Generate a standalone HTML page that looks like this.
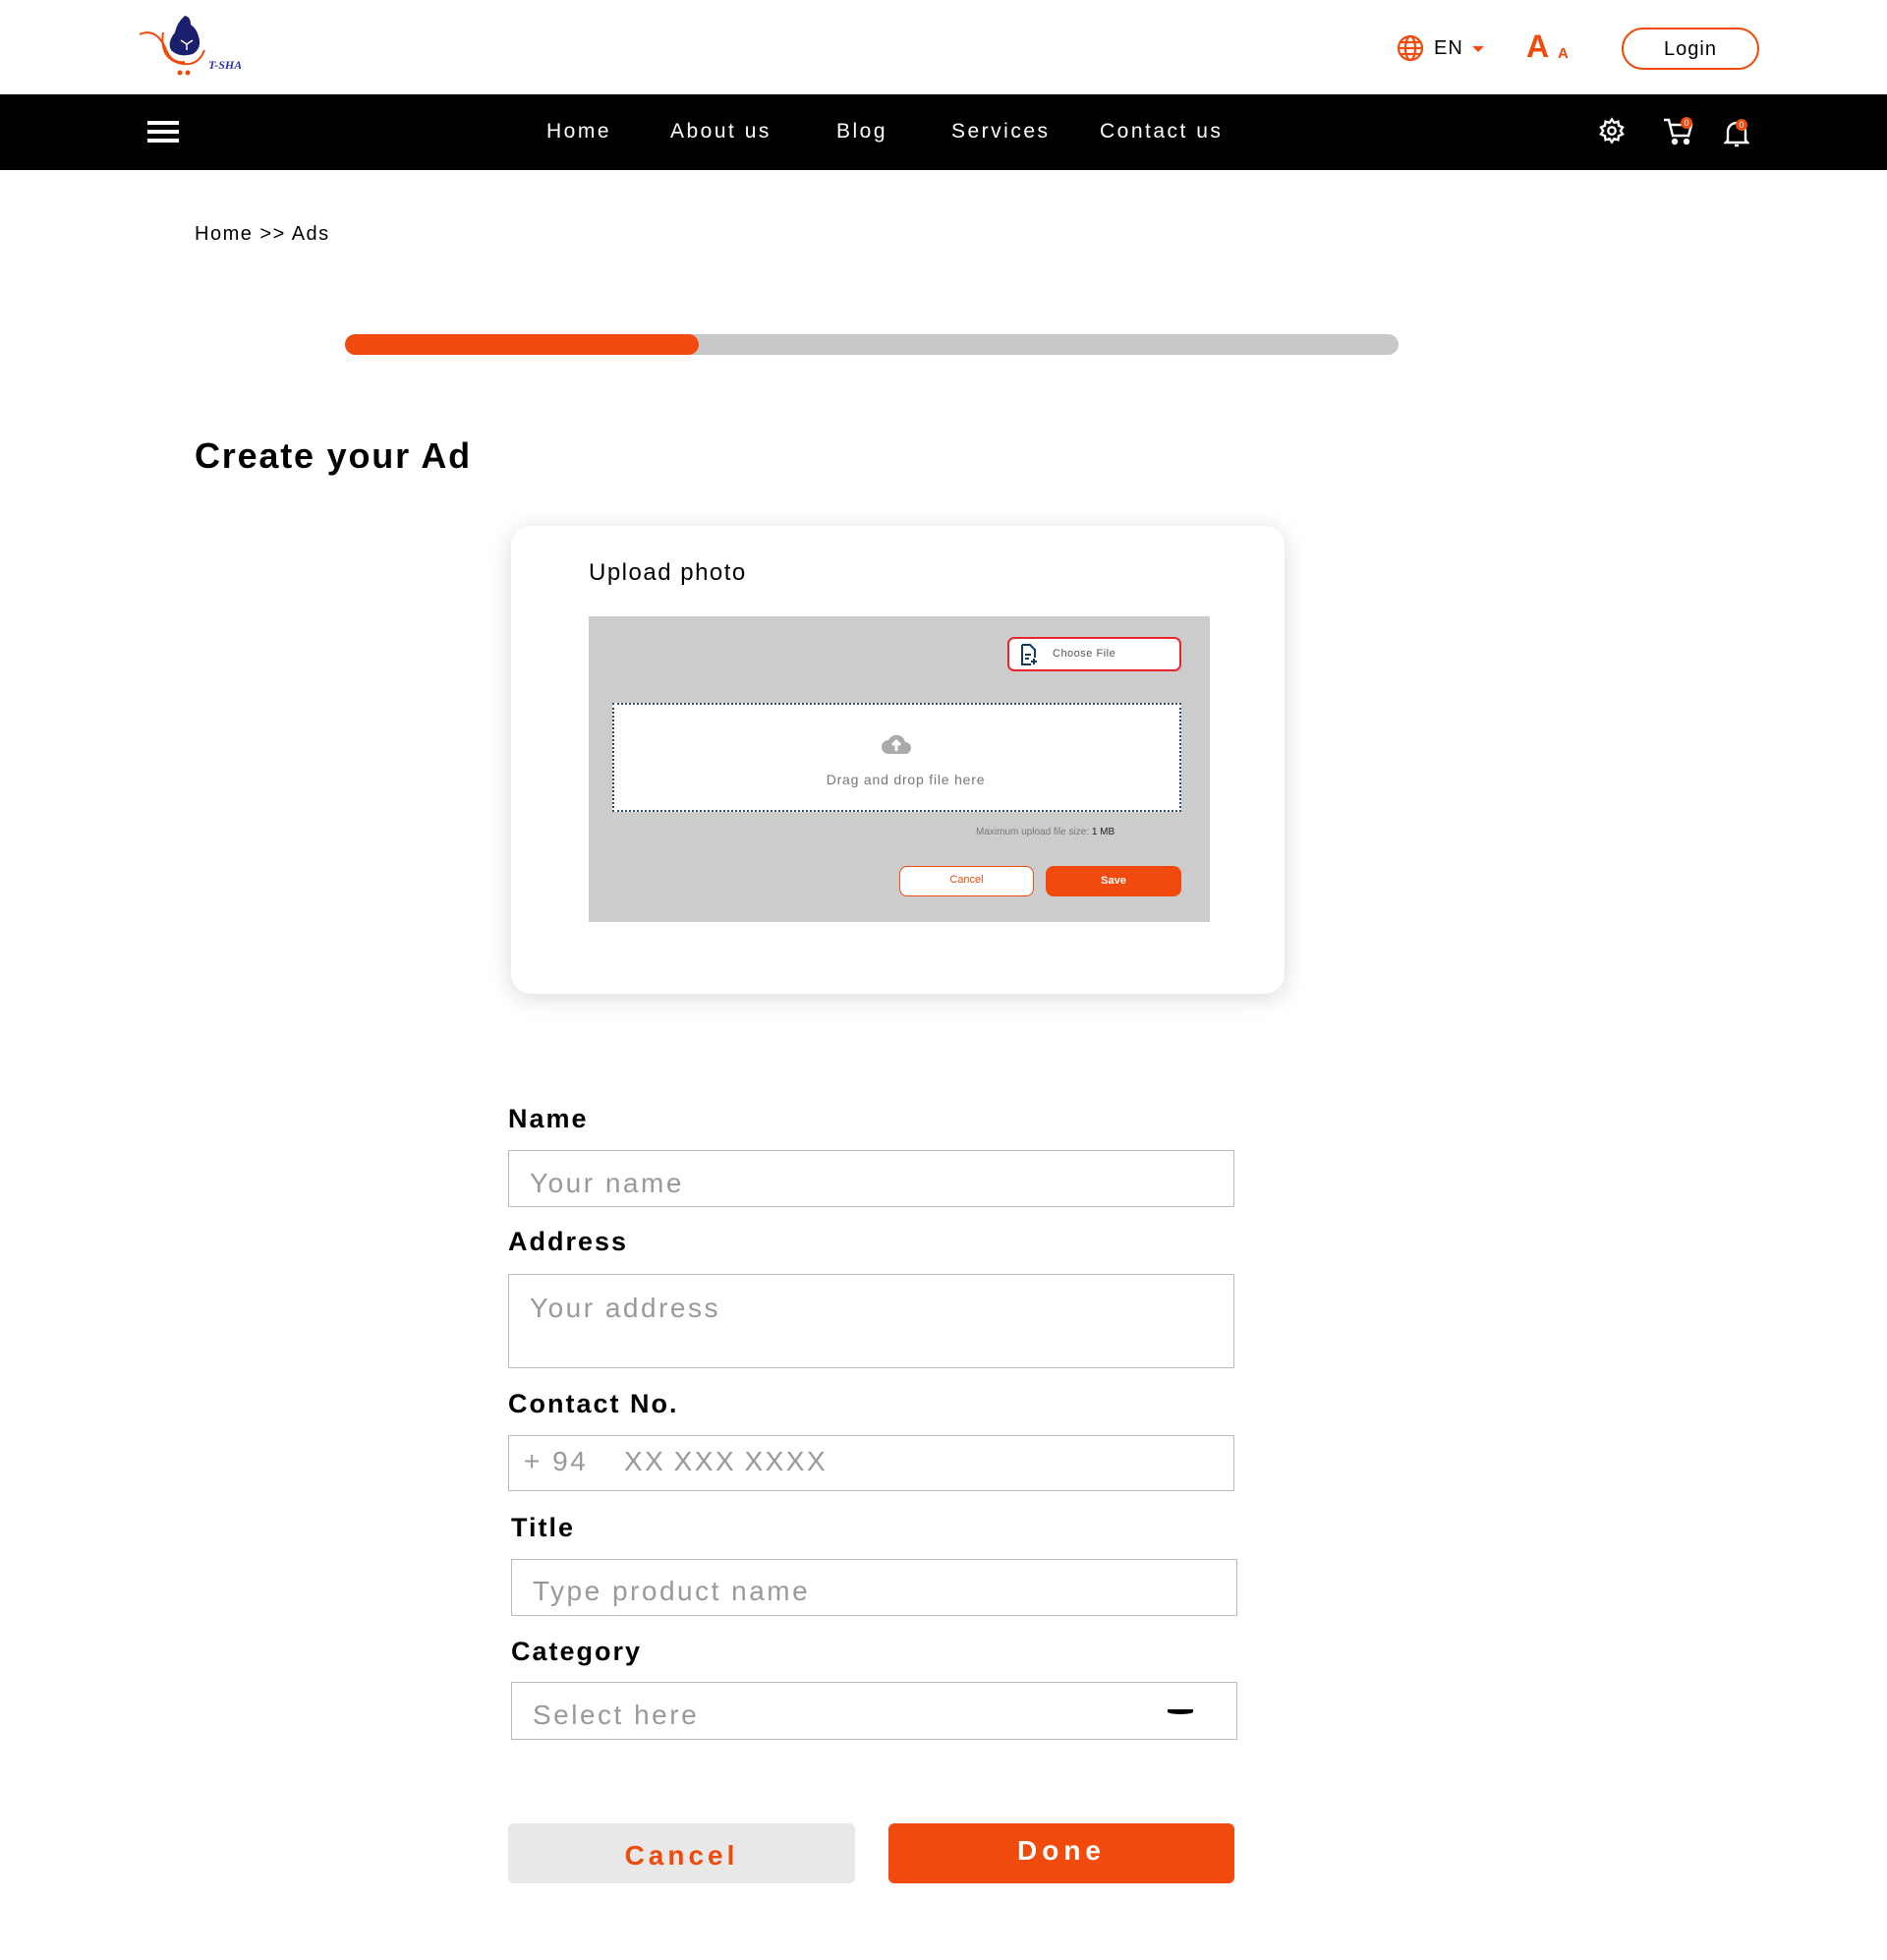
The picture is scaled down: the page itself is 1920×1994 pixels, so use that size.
<!DOCTYPE html>
<html><head><meta charset="utf-8"><style>
*{box-sizing:border-box;margin:0;padding:0}
body{width:1920px;height:1994px;background:#fff;font-family:"Liberation Sans",sans-serif;position:relative;overflow:hidden;color:#000}
.a{position:absolute}
.nav{top:96px;left:0;width:1920px;height:77px;background:#000}
.nl{color:#fff;font-size:21px;letter-spacing:2.5px;top:122px}
.lbl{font-size:27px;font-weight:bold;letter-spacing:2px;left:517px}
.inp{border:1.5px solid #bbb;background:#fff;font-size:28px;color:#999;letter-spacing:2.5px;padding-left:21px}
</style></head><body>
<svg class="a" style="left:140px;top:13px" width="105" height="68" viewBox="0 0 105 68">
<path d="M2 22 Q20 14 30 40 Q36 52 48 50" stroke="#f04a0c" stroke-width="2" fill="none"/>
<path d="M26 20 Q22 48 46 52 Q62 54 68 38" stroke="#f04a0c" stroke-width="2" fill="none"/>
<path d="M48 3 Q40 10 38 20 Q30 30 34 38 Q42 46 56 42 Q66 36 62 24 Q60 16 54 12 Q54 4 48 3Z" fill="#1a1f6e"/>
<path d="M44 28 L50 32 L56 28 M50 32 L50 38" stroke="#fff" stroke-width="1.5" fill="none"/>
<circle cx="43" cy="61" r="2.5" fill="#f04a0c"/><circle cx="51" cy="61" r="2.5" fill="#f04a0c"/>
<text x="72" y="57" font-size="12" font-style="italic" font-weight="bold" fill="#2a2faa" font-family="Liberation Serif">T-SHA</text>
</svg>
<svg class="a" style="left:1421px;top:35px" width="28" height="28" viewBox="0 0 28 28" fill="none" stroke="#f04a0c" stroke-width="2.2"><circle cx="14" cy="14" r="12"/><ellipse cx="14" cy="14" rx="5" ry="12"/><path d="M2 14h24M4 8h20M4 20h20"/></svg>
<div class="a" style="left:1459px;top:38px;font-size:20px;letter-spacing:1px">EN</div>
<div class="a" style="left:1498px;top:47px;width:0;height:0;border-left:6px solid transparent;border-right:6px solid transparent;border-top:6px solid #f04a0c"></div>
<div class="a" style="left:1553px;top:29px;font-size:32px;font-weight:bold;color:#f04a0c">A</div>
<div class="a" style="left:1585px;top:46px;font-size:15px;font-weight:bold;color:#f04a0c">A</div>
<div class="a" style="left:1650px;top:28px;width:140px;height:43px;border:2px solid #f04a0c;border-radius:22px;text-align:center;line-height:41px;font-size:20px;letter-spacing:1px">Login</div>
<div class="a nav"></div>
<div class="a" style="left:150px;top:123px;width:32px;height:4px;background:#fff;box-shadow:0 9px 0 #fff,0 18px 0 #fff"></div>
<div class="a nl" style="left:556px">Home</div>
<div class="a nl" style="left:682px">About us</div>
<div class="a nl" style="left:851px">Blog</div>
<div class="a nl" style="left:968px">Services</div>
<div class="a nl" style="left:1119px">Contact us</div>
<svg class="a" style="left:1626px;top:119px" width="28" height="28" viewBox="0 0 24 24" fill="none" stroke="#fff" stroke-width="2"><circle cx="12" cy="12" r="3.2"/><path d="M12 2l2 3 3.5-1 .5 3.5 3.5 1.5-2 3 2 3-3.5 1.5-.5 3.5-3.5-1-2 3-2-3-3.5 1-.5-3.5L2.5 15l2-3-2-3L6 7.5 6.5 4 10 5z"/></svg>
<svg class="a" style="left:1692px;top:119px" width="32" height="30" viewBox="0 0 32 30" fill="none" stroke="#fff" stroke-width="2.4"><path d="M1 3h5l4 16h16l3-11H8"/><circle cx="12" cy="25" r="2" fill="#fff"/><circle cx="24" cy="25" r="2" fill="#fff"/></svg>
<div class="a" style="left:1710px;top:119px;width:12px;height:12px;border-radius:6px;background:#f04a0c;color:#fff;font-size:9px;text-align:center;line-height:12px">0</div>
<svg class="a" style="left:1754px;top:121px" width="26" height="30" viewBox="0 0 26 30" fill="none" stroke="#fff" stroke-width="2.4"><path d="M4 22V13a9 9 0 0118 0v9l2 2H2z"/><path d="M11 27h4"/></svg>
<div class="a" style="left:1766px;top:121px;width:12px;height:12px;border-radius:6px;background:#f04a0c;color:#fff;font-size:9px;text-align:center;line-height:12px">0</div>
<div class="a" style="left:198px;top:227px;font-size:20px;letter-spacing:1.5px">Home &gt;&gt; Ads</div>
<div class="a" style="left:351px;top:340px;width:1072px;height:21px;border-radius:11px;background:#c8c8c8"></div>
<div class="a" style="left:351px;top:340px;width:360px;height:21px;border-radius:11px;background:#f04a0c"></div>
<div class="a" style="left:198px;top:443px;font-size:36px;font-weight:bold;letter-spacing:1.8px">Create your Ad</div>
<div class="a" style="left:520px;top:535px;width:787px;height:476px;border-radius:20px;background:#fff;box-shadow:0 4px 24px rgba(0,0,0,.15)"></div>
<div class="a" style="left:599px;top:569px;font-size:24px;letter-spacing:1.5px">Upload photo</div>
<div class="a" style="left:599px;top:627px;width:632px;height:311px;background:#cccccc"></div>
<div class="a" style="left:1025px;top:648px;width:177px;height:35px;border:2px solid #e8242c;border-radius:7px;background:#fff;font-size:11px;color:#555;padding:9px 0 0 44px;letter-spacing:.5px">Choose File</div>
<svg class="a" style="left:1038px;top:655px" width="18" height="22" viewBox="0 0 18 22" fill="none" stroke="#123a5a" stroke-width="2"><path d="M2 1h8l5 5v8M2 1v20h9"/><path d="M5 11h6M5 15h4M14 15v6M11 18h6"/></svg>
<div class="a" style="left:623px;top:715px;width:579px;height:111px;border:2px dotted #2c4a6e;background:#fff"></div>
<svg class="a" style="left:896px;top:743px" width="32" height="26" viewBox="0 0 32 26"><path d="M8 24a7 7 0 010-14 9 9 0 0117 2 6 6 0 010 12z" fill="#aaa"/><path d="M16 21v-9M12 15l4-4 4 4" stroke="#fff" stroke-width="3" fill="none"/></svg>
<div class="a" style="left:623px;top:785px;width:597px;text-align:center;font-size:14px;color:#777;letter-spacing:.8px">Drag and drop file here</div>
<div class="a" style="left:993px;top:841px;font-size:10px;color:#777">Maximum upload file size: <span style="color:#222">1 MB</span></div>
<div class="a" style="left:915px;top:881px;width:137px;height:31px;border:1.5px solid #f04a0c;border-radius:8px;background:#fff;color:#f04a0c;font-size:11px;text-align:center;line-height:27px">Cancel</div>
<div class="a" style="left:1064px;top:881px;width:138px;height:31px;border-radius:8px;background:#f04a0c;color:#fff;font-size:11px;font-weight:bold;text-align:center;line-height:31px">Save</div>
<div class="a lbl" style="top:1123px">Name</div>
<div class="a inp" style="left:517px;top:1170px;width:739px;height:58px;line-height:58px;padding-top:4px">Your name</div>
<div class="a lbl" style="top:1248px">Address</div>
<div class="a inp" style="left:517px;top:1296px;width:739px;height:96px;padding-top:18px">Your address</div>
<div class="a lbl" style="top:1413px">Contact No.</div>
<div class="a inp" style="left:517px;top:1460px;width:739px;height:57px;padding:0"><span class="a" style="left:15px;top:10px">+ 94</span><span class="a" style="left:117px;top:10px;word-spacing:-2px">XX XXX XXXX</span></div>
<div class="a lbl" style="top:1539px;left:520px">Title</div>
<div class="a inp" style="left:520px;top:1586px;width:739px;height:58px;line-height:64px">Type product name</div>
<div class="a lbl" style="top:1665px;left:520px">Category</div>
<div class="a inp" style="left:520px;top:1711px;width:739px;height:59px;line-height:66px">Select here</div>
<div class="a" style="left:1188px;top:1739px;width:26px;height:5px;background:#000;border-radius:0 0 50% 50%"></div>
<div class="a" style="left:517px;top:1855px;width:353px;height:61px;border-radius:6px;background:#e8e8e8;color:#f04a0c;font-size:28px;font-weight:bold;letter-spacing:4px;text-align:center;line-height:66px">Cancel</div>
<div class="a" style="left:904px;top:1855px;width:352px;height:61px;border-radius:6px;background:#f04a0c;color:#fff;font-size:28px;font-weight:bold;letter-spacing:5px;text-align:center;line-height:56px">Done</div>
</body></html>
